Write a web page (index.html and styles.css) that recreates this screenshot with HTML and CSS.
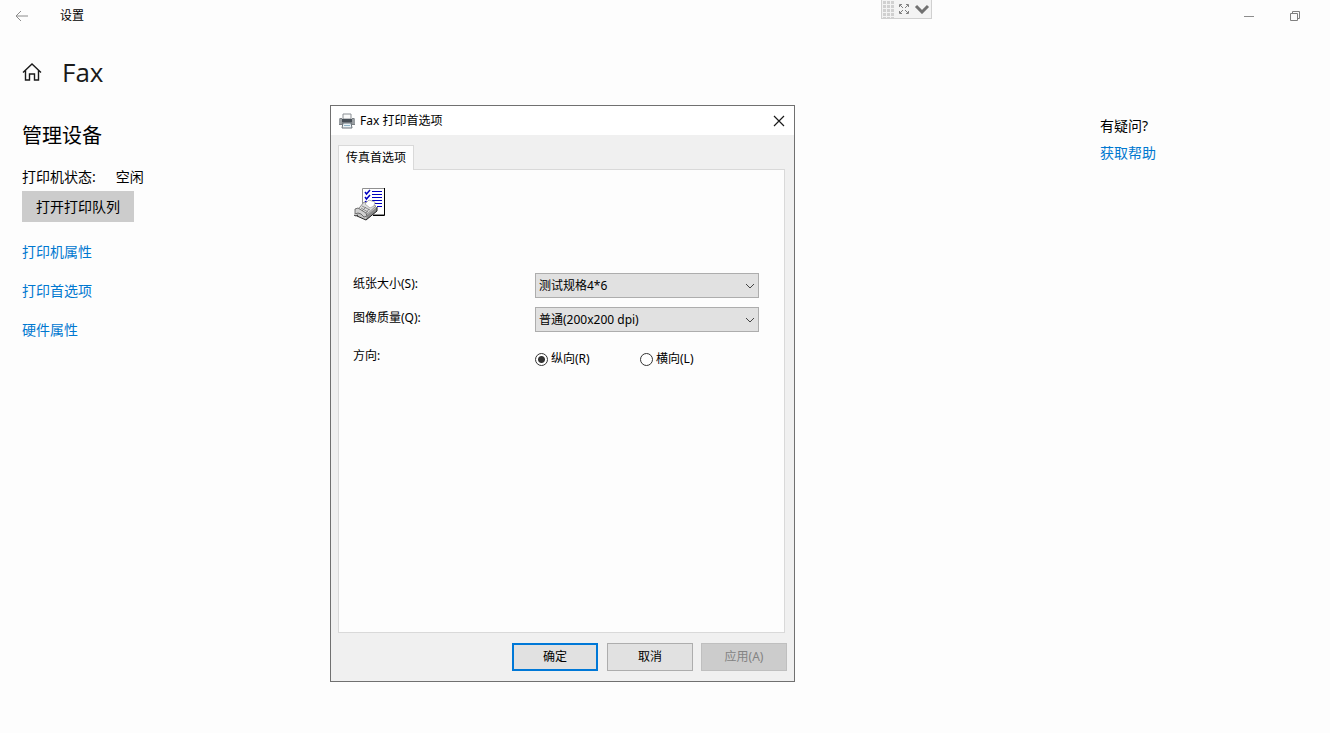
FILE: index.html
```html
<!DOCTYPE html>
<html lang="zh-CN">
<head>
<meta charset="UTF-8">
<meta name="viewport" content="width=device-width">
<title>设置</title>
<link rel="stylesheet" href="styles.css">
</head>
<body>

<div class="wrap">
    <div class="title-bar">
        <button type="button" class="back" aria-label="返回">
            <svg width="14" height="12" viewBox="0 0 14 12"><path d="M13 6H1M6 1L1 6l5 5" fill="none" stroke="#8c8c8c"/></svg>
        </button>
        <span class="title">设置</span>
        <button type="button" class="win-btn" aria-label="最小化">
            <svg width="12" height="12" viewBox="0 0 12 12"><path d="M1 6.5h10" fill="none" stroke="#8c8c8c"/></svg>
        </button>
        <button type="button" class="win-btn" aria-label="还原">
            <svg width="12" height="12" viewBox="0 0 12 12"><path d="M1.5 3.5h7v7h-7zM3.5 3V1.5h7v7H9" fill="none" stroke="#808080"/></svg>
        </button>
    </div>

    <div class="con">
        <div class="main">
            <div class="page-head">
                <a href="#" class="home" aria-label="主页">
                    <svg width="20" height="18" viewBox="0 0 20 18"><path d="M1 9.5L10 1l9 8.5M3.5 7.5v9.5h4v-6h5v6h4V7.5" fill="none" stroke="#1a1a1a" stroke-width="1.4"/></svg>
                </a>
                <h1>Fax</h1>
            </div>
            <h2>管理设备</h2>
            <p class="status"><span>打印机状态:</span><span>空闲</span></p>
            <button type="button" class="queue">打开打印队列</button>
            <ul class="nav-list">
                <li><a href="#">打印机属性</a></li>
                <li><a href="#">打印首选项</a></li>
                <li><a href="#">硬件属性</a></li>
            </ul>
        </div>
        <div class="help">
            <p>有疑问?</p>
            <a href="#">获取帮助</a>
        </div>
    </div>
</div>

<!-- 远程工具条 -->
<div class="remote-bar">
    <span class="grip"></span>
    <svg width="12" height="12" viewBox="0 0 12 12"><path d="M1.5 4V1.5H4M2 2l3 3M8 1.5h2.500V4M10 2L7 5M1.500 8v2.500H4M2 10l3-3M10.500 8v2.500H8M10 10L7 7" fill="none" stroke="#808080"/></svg>
    <svg width="18" height="10" viewBox="0 0 18 10"><path d="M3 2l6 6 6-6" fill="none" stroke="#707070" stroke-width="3"/></svg>
</div>

<!-- 打印首选项 -->
<form class="dialog">
    <div class="dialog-head">
        <svg width="16" height="16" viewBox="0 0 16 16">
            <path d="M4 1h8v5H4z" fill="#fafafa" stroke="#8a8f94"/>
            <path d="M1 5h2v1h10V5h2l1 1v6H0V6z" fill="#7b8085"/>
            <path d="M0 6h3v5H0zM13 6h3v5h-3z" fill="#9a9fa3"/>
            <path d="M3 6h10v3H3z" fill="#454d55"/>
            <path d="M4 10h8l1 5H3z" fill="#e9f1f5" stroke="#6a737a"/>
            <path d="M5 12h6v1H5z" fill="#8fb3c7"/>
        </svg>
        <span class="dialog-title">Fax 打印首选项</span>
        <button type="button" class="close" aria-label="关闭">
            <svg width="12" height="12" viewBox="0 0 12 12"><path d="M1 1l10 10M11 1L1 11" fill="none" stroke="#1a1a1a" stroke-width="1.2"/></svg>
        </button>
    </div>
    <div class="dialog-body">
        <button type="button" class="tab">传真首选项</button>
        <div class="panel">
            <svg class="fax" width="33" height="34" viewBox="0 0 33 34">
                <path d="M9.500 1.500h22v26h-22z" fill="#fff" stroke="#909090"/>
                <path d="M31.500 1v27.500H20" fill="none" stroke="#000"/>
                <path d="M12 5l1.500 2L17 3M12 10l1.500 2L17 8M12 15l1.500-1" fill="none" stroke="#0000c0" stroke-width="1.500"/>
                <path d="M19 4.500h10M19 7.500h10M19 10.500h10M19 13.500h10M22 16.500h7M24 19.500h5" stroke="#0000c0"/>
                <path d="M4 23l7-8h3l9 5 1 4-11 9-10-5z" fill="#c4c4c4"/>
                <path d="M13 33l11-9v-4l-10 8z" fill="#8a8a8a"/>
                <path d="M3 25l8-10 12 4-10 9z" fill="#dedede" stroke="#808080" stroke-width=".8"/>
                <path d="M12 17l4-4 6 2-1 4-4 2z" fill="#fff" stroke="#a0a0a0" stroke-width=".8"/>
                <path d="M9 19l8 4M8 21l7 4M13 20l-4 4M16 22l-3 4" stroke="#777" stroke-width=".8"/>
                <path d="M2 22l3-1 8 5 1 3-3 1-3-3-3-1-3 1z" fill="#d0d0d0" stroke="#555" stroke-width=".8"/>
                <path d="M1 28l2 1 2-1M4 29l9 4 11-9v-4" fill="none" stroke="#222"/>
            </svg>
            <div class="fields">
                <label for="paper">纸张大小(S):</label>
                <select id="paper">
                    <option>测试规格4*6</option>
                </select>
                <label for="quality">图像质量(Q):</label>
                <select id="quality">
                    <option>普通(200x200 dpi)</option>
                </select>
                <span id="direction" class="direction">方向:</span>
                <div class="radios" role="radiogroup" aria-labelledby="direction">
                    <label><input type="radio" name="dir" checked>纵向(R)</label>
                    <label><input type="radio" name="dir">横向(L)</label>
                </div>
            </div>
        </div>
        <div class="btns">
            <button type="submit" class="ok">确定</button>
            <button type="button">取消</button>
            <button type="button" disabled>应用(A)</button>
        </div>
    </div>
</form>

</body>
</html>
```
FILE: styles.css
```css
* {
    margin: 0;
    padding: 0;
    box-sizing: border-box;
}

body {
    position: relative;
    min-height: 100vh;
    font: 14px/20px "Noto Sans", "Noto Sans CJK SC", sans-serif;
    color: #000;
    background: #fdfdfd;
}

svg {
    display: block;
    flex: none;
}

ul {
    list-style: none;
}

a {
    color: #0078d0;
    text-decoration: none;
}

button,
select {
    font: inherit;
    color: inherit;
    border: 0;
    border-radius: 0;
    background: none;
}

/* 标题栏 */
.title-bar {
    display: flex;
    align-items: center;
    height: 32px;
    padding-right: 12px;
    font-size: 12px;
}

.back {
    padding: 0 15px;
}

.title {
    flex: 1;
    padding-left: 16px;
    line-height: 32px;
}

.win-btn {
    display: flex;
    justify-content: center;
    width: 46px;
}

.con {
    display: flex;
}

/* 左侧 */
.main {
    flex: 1;
    padding: 20px 22px;
}

.page-head {
    display: flex;
    align-items: center;
    gap: 20px;
    height: 40px;
}

.page-head h1 {
    font: 400 26px/40px "Open Sans", "Noto Sans", sans-serif;
    color: #1a1a1a;
}

.main h2 {
    margin-top: 29px;
    font-size: 20px;
    line-height: 30px;
    font-weight: 400;
}

.status {
    display: flex;
    gap: 20px;
    margin: 16px 0 4px;
}

.queue {
    width: 112px;
    height: 31px;
    background: #ccc;
}

.nav-list {
    display: flex;
    flex-direction: column;
    gap: 19px;
    margin-top: 20px;
}

/* 右侧 */
.help {
    width: 230px;
    padding-top: 84px;
}

.help p {
    margin-bottom: 7px;
}

/* 远程工具条 */
.remote-bar {
    position: absolute;
    top: 0;
    left: 881px;
    display: flex;
    align-items: center;
    gap: 3px;
    width: 51px;
    height: 19px;
    border: 1px solid #d0d0d0;
    border-top: 0;
    background: #f3f3f3;
}

.grip {
    width: 13px;
    height: 18px;
    background: repeating-linear-gradient(#f3f3f3 0 1px, transparent 1px 4px), repeating-linear-gradient(90deg, #f3f3f3 0 1px, #d0d0d0 1px 4px);
}

/* 弹窗 */
.dialog {
    position: absolute;
    top: 105px;
    left: 330px;
    width: 465px;
    border: 1px solid #707070;
    font-size: 12px;
    background: #f0f0f0;
}

.dialog-head {
    display: flex;
    align-items: center;
    gap: 5px;
    height: 29px;
    padding: 0 7px 0 8px;
    background: #fff;
}

.dialog-title {
    flex: 1;
}

.close {
    padding: 2px;
}

.dialog-body {
    padding: 10px 7px;
}

.tab {
    display: block;
    position: relative;
    z-index: 1;
    height: 25px;
    margin-bottom: -1px;
    padding: 0 7px;
    border: 1px solid #d9d9d9;
    border-bottom: 0;
    line-height: 22px;
    background: #fdfdfd;
}

.panel {
    min-height: 464px;
    margin-right: 2px;
    padding: 17px 14px;
    border: 1px solid #d9d9d9;
    background: #fdfdfd;
}

.fields {
    display: grid;
    grid-template-columns: 182px 224px;
    row-gap: 9px;
    margin-top: 52px;
    line-height: 22px;
}

.fields select {
    appearance: none;
    height: 25px;
    padding: 0 24px 0 3px;
    border: 1px solid #adadad;
    background: #e1e1e1 url("data:image/svg+xml,%3Csvg xmlns='http://www.w3.org/2000/svg' width='10' height='6'%3E%3Cpath d='M1 1l4 4 4-4' fill='none' stroke='%23444'/%3E%3C/svg%3E") no-repeat right 3px center;
}

.direction,
.radios {
    padding-top: 4px;
}

.radios {
    display: flex;
    line-height: 28px;
}

.radios label {
    display: flex;
    align-items: center;
    gap: 3px;
    width: 105px;
}

.radios input {
    appearance: none;
    width: 13px;
    height: 13px;
    border: 1px solid #333;
    border-radius: 50%;
    background: #fff;
}

.radios input:checked {
    background: radial-gradient(circle, #333 3px, #fff 4px);
}

.btns {
    display: flex;
    justify-content: flex-end;
    gap: 8px;
    margin-top: 10px;
}

.btns button {
    width: 86px;
    height: 28px;
    border: 1px solid #adadad;
    background: #e1e1e1;
}

.btns .ok {
    margin-right: 1px;
    border: 2px solid #0078d7;
}

.btns button:disabled {
    border-color: #bfbfbf;
    color: #838383;
    background: #ccc;
}
```
